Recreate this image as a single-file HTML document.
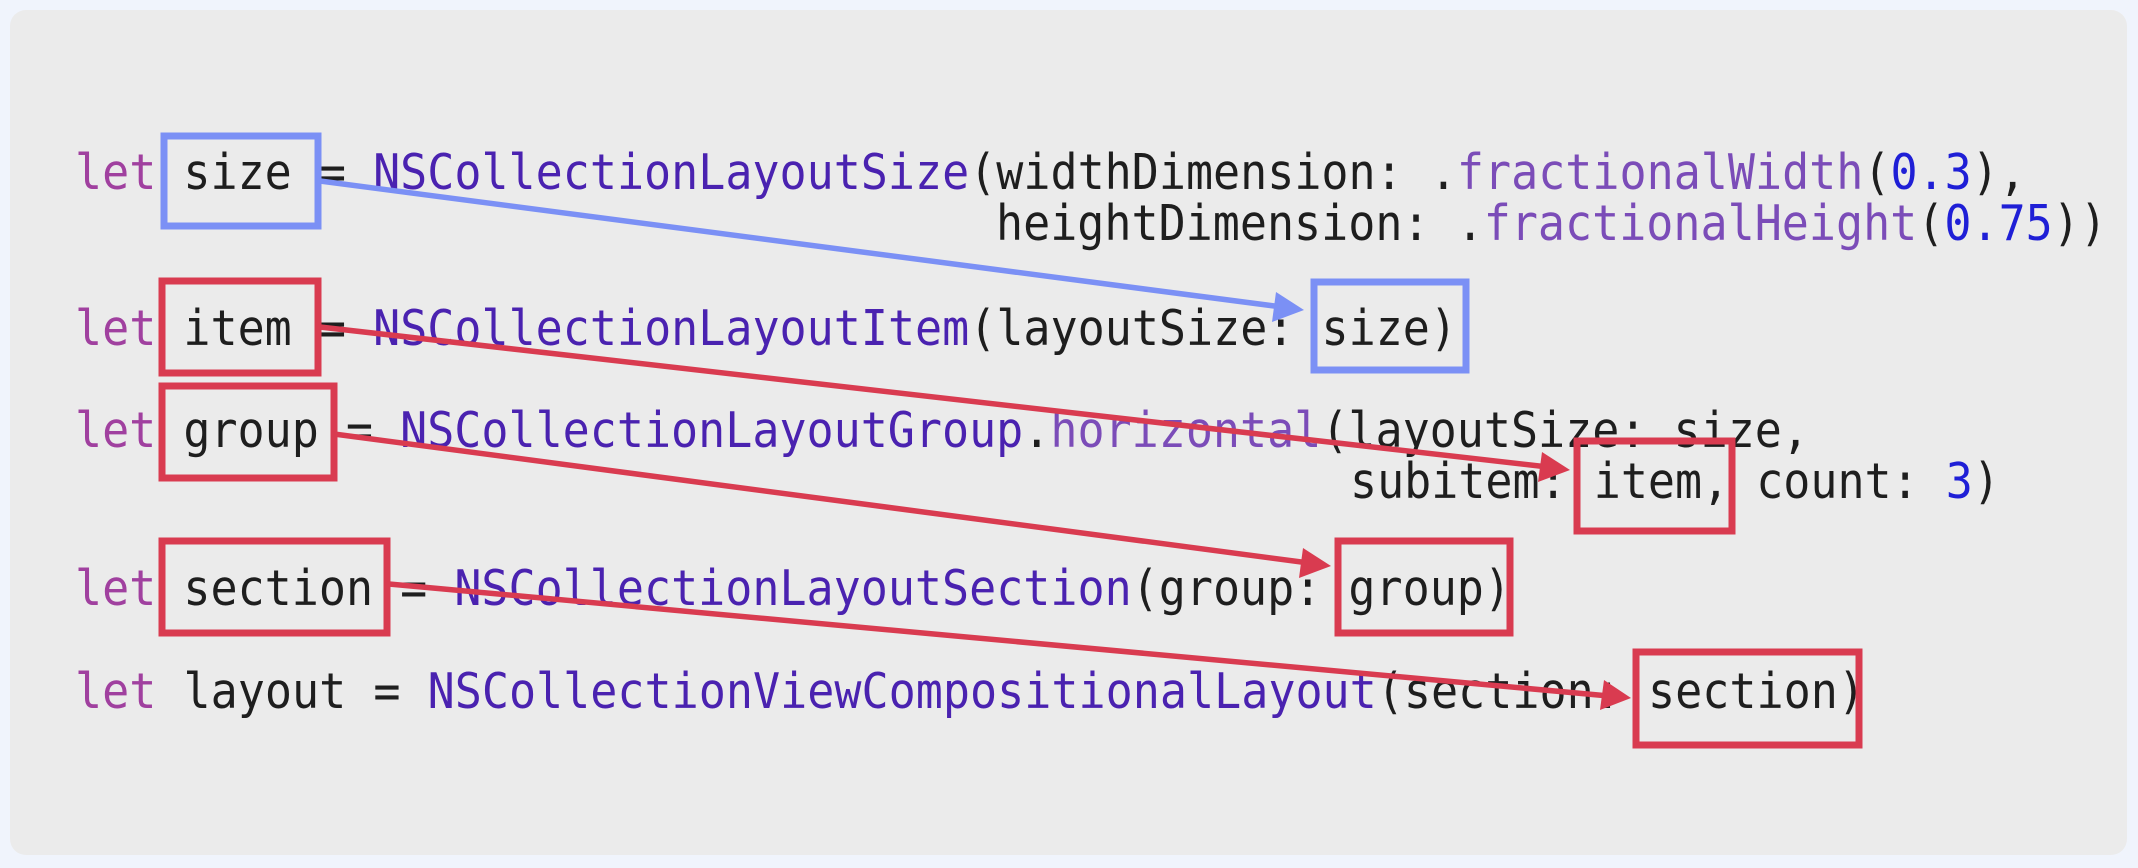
<!DOCTYPE html>
<html><head><meta charset="utf-8"><style>
html,body{margin:0;padding:0;background:#f0f4fc;}
svg{display:block}
text{font-family:"DejaVu Sans Mono","Liberation Mono",monospace;font-size:49px;fill:#1e1e1e;white-space:pre}
.k{fill:#a0409f}.t{fill:#4a22b0}.m{fill:#7b4cb8}.n{fill:#1f1fd6}
</style></head><body>
<svg width="2138" height="868" viewBox="0 0 2138 868" xmlns="http://www.w3.org/2000/svg">
<rect x="10" y="10" width="2117" height="845" rx="16" fill="#ebebeb"/>
<g xml:space="preserve">
<text x="75" y="189" textLength="1951" lengthAdjust="spacingAndGlyphs"><tspan class="k">let</tspan> size = <tspan class="t">NSCollectionLayoutSize</tspan>(widthDimension: .<tspan class="m">fractionalWidth</tspan>(<tspan class="n">0.3</tspan>),</text>
<text x="996" y="240" textLength="1111" lengthAdjust="spacingAndGlyphs">heightDimension: .<tspan class="m">fractionalHeight</tspan>(<tspan class="n">0.75</tspan>))</text>
<text x="75" y="345" textLength="1382" lengthAdjust="spacingAndGlyphs"><tspan class="k">let</tspan> item = <tspan class="t">NSCollectionLayoutItem</tspan>(layoutSize: size)</text>
<text x="75" y="447" textLength="1734" lengthAdjust="spacingAndGlyphs"><tspan class="k">let</tspan> group = <tspan class="t">NSCollectionLayoutGroup</tspan>.<tspan class="m">horizontal</tspan>(layoutSize: size,</text>
<text x="1350" y="498" textLength="650" lengthAdjust="spacingAndGlyphs">subitem: item, count: <tspan class="n">3</tspan>)</text>
<text x="75" y="605" textLength="1436" lengthAdjust="spacingAndGlyphs"><tspan class="k">let</tspan> section = <tspan class="t">NSCollectionLayoutSection</tspan>(group: group)</text>
<text x="75" y="708" textLength="1790" lengthAdjust="spacingAndGlyphs"><tspan class="k">let</tspan> layout = <tspan class="t">NSCollectionViewCompositionalLayout</tspan>(section: section)</text>
</g>
<g fill="none" stroke-width="7">
<rect x="164" y="136" width="154" height="90" stroke="#7b90f5"/>
<rect x="1314" y="282" width="152" height="88" stroke="#7b90f5"/>
<rect x="162" y="281" width="156" height="92" stroke="#d93b50"/>
<rect x="162" y="386" width="172" height="92" stroke="#d93b50"/>
<rect x="1577" y="441" width="155" height="90" stroke="#d93b50"/>
<rect x="162" y="541" width="225" height="92" stroke="#d93b50"/>
<rect x="1338" y="541" width="172" height="92" stroke="#d93b50"/>
<rect x="1636" y="652" width="223" height="93" stroke="#d93b50"/>
</g>
<g stroke-width="5.5" stroke-linecap="round">
<line x1="320" y1="181" x2="1282" y2="307" stroke="#7b90f5"/>
<line x1="320" y1="327" x2="1548" y2="467" stroke="#d93b50"/>
<line x1="334" y1="434" x2="1309" y2="563" stroke="#d93b50"/>
<line x1="389" y1="584" x2="1609" y2="696" stroke="#d93b50"/>
</g>
<polygon points="1304,310 1276,292 1272,322" fill="#7b90f5"/>
<polygon points="1570,470 1542,452 1538,482" fill="#d93b50"/>
<polygon points="1331,566 1303,548 1299,578" fill="#d93b50"/>
<polygon points="1631,698 1604,680 1600,710" fill="#d93b50"/>
</svg>
</body></html>
